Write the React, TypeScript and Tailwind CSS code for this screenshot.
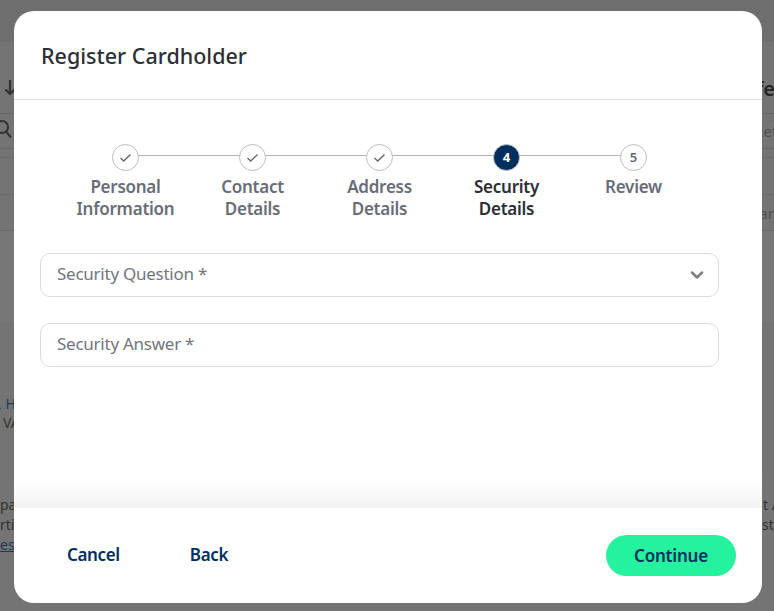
import { ChevronDown } from 'lucide-react'

const steps = [
  { label: ['Personal', 'Information'], state: 'done' },
  { label: ['Contact', 'Details'], state: 'done' },
  { label: ['Address', 'Details'], state: 'done' },
  { label: ['Security', 'Details'], state: 'active' },
  { label: ['Review'], state: 'todo' },
]

function StepDot({ state, n }: { state: string; n: number }) {
  if (state === 'active') {
    return (
      <div className="w-[27px] h-[27px] rounded-full bg-[#002f5f] border border-[#c4c4c4] flex items-center justify-center text-white text-[13px] font-bold">
        {n}
      </div>
    )
  }
  return (
    <div className="w-[27px] h-[27px] rounded-full bg-white border border-[#bdbdbd] flex items-center justify-center text-[#5f6470] text-[13px] font-semibold">
      {state === 'done' ? (
        <svg width="13" height="13" viewBox="0 0 13 13" fill="none" stroke="#5f6470" strokeWidth="1.3">
          <path d="M1.5 7l3.2 3L11.5 3.5" />
        </svg>
      ) : (
        n
      )}
    </div>
  )
}

function Field({ label, select }: { label: string; select?: boolean }) {
  return (
    <div className="h-[44px] rounded-[10px] border border-[#dcdcdc] pl-[16px] pr-[11px] flex items-center justify-between text-[17px] tracking-[-0.25px] text-[#71757e]">
      <span className="-mt-[2px]">{label}</span>
      {select && <ChevronDown size={20} strokeWidth={3} className="text-[#808080] -mt-[1px]" />}
    </div>
  )
}

export default function App() {
  return (
    <div className="relative h-[611px] w-[774px] overflow-hidden bg-[#747474] font-['Noto_Sans',sans-serif]">
      {/* page dimmed behind the modal */}
      <div className="h-[42px] bg-[#6e6e6e]" />
      <div className="h-[72px] border-b border-[#666] flex items-center justify-between text-[20px] font-semibold text-[#252525]">
        <svg width="12" height="17" viewBox="0 0 12 17" fill="none" stroke="#333" strokeWidth="2.2" className="ml-[4px] mt-[20px]">
          <path d="M6 1v14M1.5 10.5L6 15l4.5-4.5" />
        </svg>
        <span className="mt-[22px] mr-[-1px]">fe</span>
      </div>
      <div className="h-[35px] border-b border-[#666] flex items-center justify-end text-[15px] text-[#505050]">
        <span className="mr-[-3px]">Ref</span>
      </div>
      <div className="h-[9px] border-b border-[#6a6a6a]" />
      <div className="h-[37px] border-b border-[#6a6a6a]" />
      <div className="h-[36px] border-b border-[#6a6a6a]" />
      <div className="h-[91px] bg-[#777]" />

      <div className="absolute left-[-6px] top-[119px] text-[#333]">
        <svg width="18" height="20" viewBox="0 0 18 20" fill="none" stroke="currentColor" strokeWidth="2">
          <circle cx="8" cy="8" r="6" />
          <path d="M12 12.5l5 6" />
        </svg>
      </div>
      <div className="absolute left-[-2px] top-[393px] text-[14px] leading-[22px] text-[#1d3a5a] whitespace-nowrap">, H</div>
      <div className="absolute left-[3px] top-[412px] text-[14px] leading-[22px] text-[#333]">VA</div>
      <div className="absolute left-0 top-[495px] text-[14px] leading-[20px] text-[#333]">
        <div>pa</div>
        <div>rti</div>
        <div className="text-[#1d3a5a] underline">es</div>
      </div>
      <div className="absolute left-[763px] top-[495px] text-[14px] leading-[20px] text-[#333] whitespace-nowrap">
        <div>t A</div>
        <div className="-ml-[1px]">st</div>
      </div>
      <div className="absolute right-0 top-[202px] text-[15px] text-[#505050]">ar</div>

      {/* modal */}
      <div className="absolute left-[14px] top-[11px] w-[748px] h-[592px] rounded-[20px] bg-white flex flex-col overflow-hidden">
        <div className="h-[89px] shrink-0 border-b border-[#dedede] pl-[27px] pt-[28px] text-[21.5px] leading-[34px] font-medium text-[#2c2f36]">
          Register Cardholder
        </div>

        <div className="flex-1 px-[26px] pt-[44px] relative">
          <div className="relative flex w-[635px] ml-[22px]">
            <div className="absolute left-[64px] right-[64px] top-[11px] h-px bg-[#b5b5b5]" />
            {steps.map((s, i) => (
              <div key={i} className="relative w-[127px] flex flex-col items-center">
                <StepDot state={s.state} n={i + 1} />
                <div
                  className={`mt-[5px] text-center text-[17px] tracking-[-0.25px] leading-[22px] font-semibold ${
                    s.state === 'active' ? 'text-[#2c2f36]' : 'text-[#696d78]'
                  }`}
                >
                  {s.label.map((l) => (
                    <div key={l}>{l}</div>
                  ))}
                </div>
              </div>
            ))}
          </div>

          <div className="mt-[33px] w-[679px] flex flex-col gap-[26px]">
            <Field label="Security Question *" select />
            <Field label="Security Answer *" />
          </div>

          <div className="absolute left-0 right-0 bottom-0 h-[30px] bg-gradient-to-b from-white to-[#f2f2f2]" />
        </div>

        <div className="h-[95px] shrink-0 flex items-center justify-between pl-[53px] pr-[26px]">
          <div className="flex gap-[70px] text-[17px] tracking-[-0.35px] font-semibold text-[#002f5f] -mt-[2px]">
            <span>Cancel</span>
            <span>Back</span>
          </div>
          <div className="w-[130px] h-[41px] rounded-full bg-[#24f29c] flex items-center justify-center text-[17px] tracking-[-0.2px] font-semibold text-[#002f5f]">
            <span className="mt-[1px]">Continue</span>
          </div>
        </div>
      </div>
    </div>
  )
}
